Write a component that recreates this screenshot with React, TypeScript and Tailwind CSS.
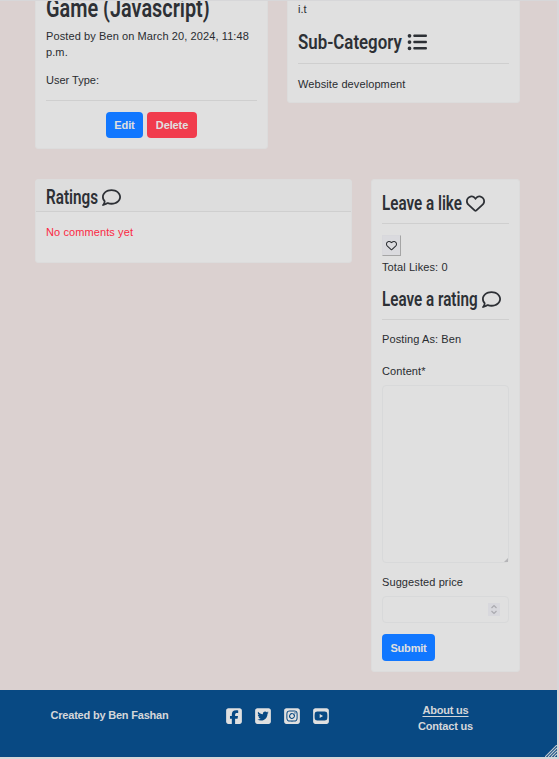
import type { ReactNode } from "react";
import {
  FaListUl,
  FaRegComment,
  FaRegHeart,
  FaSquareFacebook,
  FaSquareInstagram,
  FaSquareTwitter,
  FaSquareYoutube,
} from "react-icons/fa6";

const cardClass = "rounded-[3px] border border-[#dcdcdc] bg-[#e0e0e0]";

function Title({ text, width, scale, children }: { text: string; width: string; scale: string; children?: ReactNode }) {
  return (
    <h2 className="flex h-[26px] items-center font-['Roboto','Liberation_Sans',sans-serif] text-[21px] leading-[26px] font-semibold whitespace-nowrap text-[#2d3035]">
      <span className={`block shrink-0 ${width}`}>
        <span className={`block w-max origin-left ${scale}`}>{text}</span>
      </span>
      {children}
    </h2>
  );
}

function Rule() {
  return <div className="h-px bg-[#cfcfcf]" />;
}

export default function App() {
  return (
    <div className="h-[759px] w-[559px] overflow-hidden bg-[#d7d7d9] pt-px font-['Liberation_Sans',Arial,sans-serif] text-[11px] leading-4 text-[#292c30]">
      <div className="mr-0.5 h-[689px] overflow-hidden bg-[#dbd1d0]">
        <main className="flex flex-col gap-[30px] pr-[37px] pl-[35px]">
          <div className="flex items-start gap-[19px]">
            <section className={`${cardClass} -mt-1 h-[152px] w-[233px] px-2.5`}>
              <h1 className="-mt-[6px] h-[33px] font-['Roboto','Liberation_Sans',sans-serif] text-[26px] leading-[33px] font-semibold whitespace-nowrap text-[#2d3035]">
                <span className="block w-max origin-left scale-x-[0.764]">Game (Javascript)</span>
              </h1>
              <p className="mt-[3px] w-[211px] tracking-[0.1px]">Posted by Ben on March 20, 2024, 11:48 p.m.</p>
              <p className="mt-3 mb-3">User Type:</p>
              <Rule />
              <div className="mt-[11px] flex justify-center gap-1 font-bold tracking-[-0.1px] text-[#e0e0e0]">
                <button className="h-[26px] w-[37px] rounded bg-[#1177ff]">Edit</button>
                <button className="h-[26px] w-[50px] rounded bg-[#f13c4d]">Delete</button>
              </div>
            </section>

            <section className={`${cardClass} -mt-1 h-[106px] w-[233px] px-2.5`}>
              <p className="mt-[3px] mb-3">i.t</p>
              <Title text="Sub-Category" width="w-[109px]" scale="scale-x-[0.802]">
                <FaListUl className="size-5" />
              </Title>
              <div className="mt-2 mb-3"><Rule /></div>
              <p className="tracking-[0.1px]">Website development</p>
            </section>
          </div>

          <div className="flex items-start gap-[19px]">
            <section className={`${cardClass} h-[84px] w-[317px]`}>
              <div className="h-8 border-b border-[#cfcfcf] bg-[#dddddd] px-2.5 pt-1">
                <Title text="Ratings" width="w-[56px]" scale="scale-x-[0.727]">
                  <FaRegComment className="size-[19px]" />
                </Title>
              </div>
              <p className="px-2.5 pt-3 tracking-[0.1px] text-[#fb2843]">No comments yet</p>
            </section>

            <section className={`${cardClass} h-[493px] w-[149px] px-2.5 pt-2.5`}>
              <Title text="Leave a like" width="w-[84px]" scale="scale-x-[0.725]">
                <FaRegHeart className="size-[19px]" />
              </Title>
              <div className="mt-[7px] mb-[11px]"><Rule /></div>
              <button className="flex h-[21px] w-[19px] items-center justify-center border border-t-[#d8d8dc] border-r-[#a5a5a5] border-b-[#a5a5a5] border-l-[#d8d8dc] bg-[#dadade]">
                <FaRegHeart className="size-[11px]" />
              </button>
              <p className="mt-[3px] tracking-[0.1px]">Total Likes: 0</p>
              <div className="mt-[11px]">
                <Title text="Leave a rating" width="w-[100px]" scale="scale-x-[0.725]">
                  <FaRegComment className="size-[19px]" />
                </Title>
              </div>
              <div className="mt-[7px] mb-[11px]"><Rule /></div>
              <p className="tracking-[0.1px]">Posting As: Ben</p>
              <form>
                <label className="mt-4 block tracking-[0.1px]">Content*</label>
                <div className="relative mt-1.5">
                  <textarea className="block h-[178px] w-full resize-none rounded border border-[#d8d9da] bg-[#e0e0e0]" />
                  <svg className="absolute right-px bottom-px size-1" viewBox="0 0 4 4" fill="#b5b5b8">
                    <path d="M4 0V4H0Z" />
                  </svg>
                </div>
                <label className="mt-[11px] block tracking-[0.1px]">Suggested price</label>
                <div className="mt-1.5 flex h-[27px] items-center justify-end rounded border border-[#d8d9da] pr-2">
                  <span className="flex h-[13px] w-3 items-center justify-center bg-[#d8d8dd]">
                    <svg viewBox="0 0 8 11" className="h-[11px] w-2" fill="none" stroke="#aaaaaf" strokeWidth="1.2">
                      <path d="M1.5 4 4 1.5 6.5 4M1.5 7 4 9.5 6.5 7" />
                    </svg>
                  </span>
                </div>
                <button type="button" className="mt-[11px] h-[27px] w-[53px] rounded bg-[#1177ff] font-bold tracking-[-0.2px] text-[#e0e0e0]">Submit</button>
              </form>
            </section>
          </div>
        </main>
      </div>

      <footer className="relative mr-0.5 flex h-[67px] bg-[#084983] font-bold tracking-[-0.2px] text-[#d5d7da]">
        <p className="w-[219px] pt-[17px] text-center">Created by Ben Fashan</p>
        <div className="flex w-[117px] items-start justify-center gap-[11px] pt-[17px] text-[#e0e0e0]">
          <FaSquareFacebook className="size-[18px]" />
          <FaSquareTwitter className="size-[18px]" />
          <FaSquareInstagram className="size-[18px]" />
          <FaSquareYoutube className="size-[18px]" />
        </div>
        <div className="flex w-[219px] flex-col items-center pt-3">
          <a className="underline underline-offset-2">About us</a>
          <a>Contact us</a>
        </div>
        <svg className="absolute right-0 bottom-0 size-3" viewBox="0 0 12 12" stroke="#c3c8cd" strokeWidth="1.2">
          <path d="M0 12 12 0M3 12 12 3M6 12 12 6M9 12 12 9" />
        </svg>
      </footer>
    </div>
  );
}
